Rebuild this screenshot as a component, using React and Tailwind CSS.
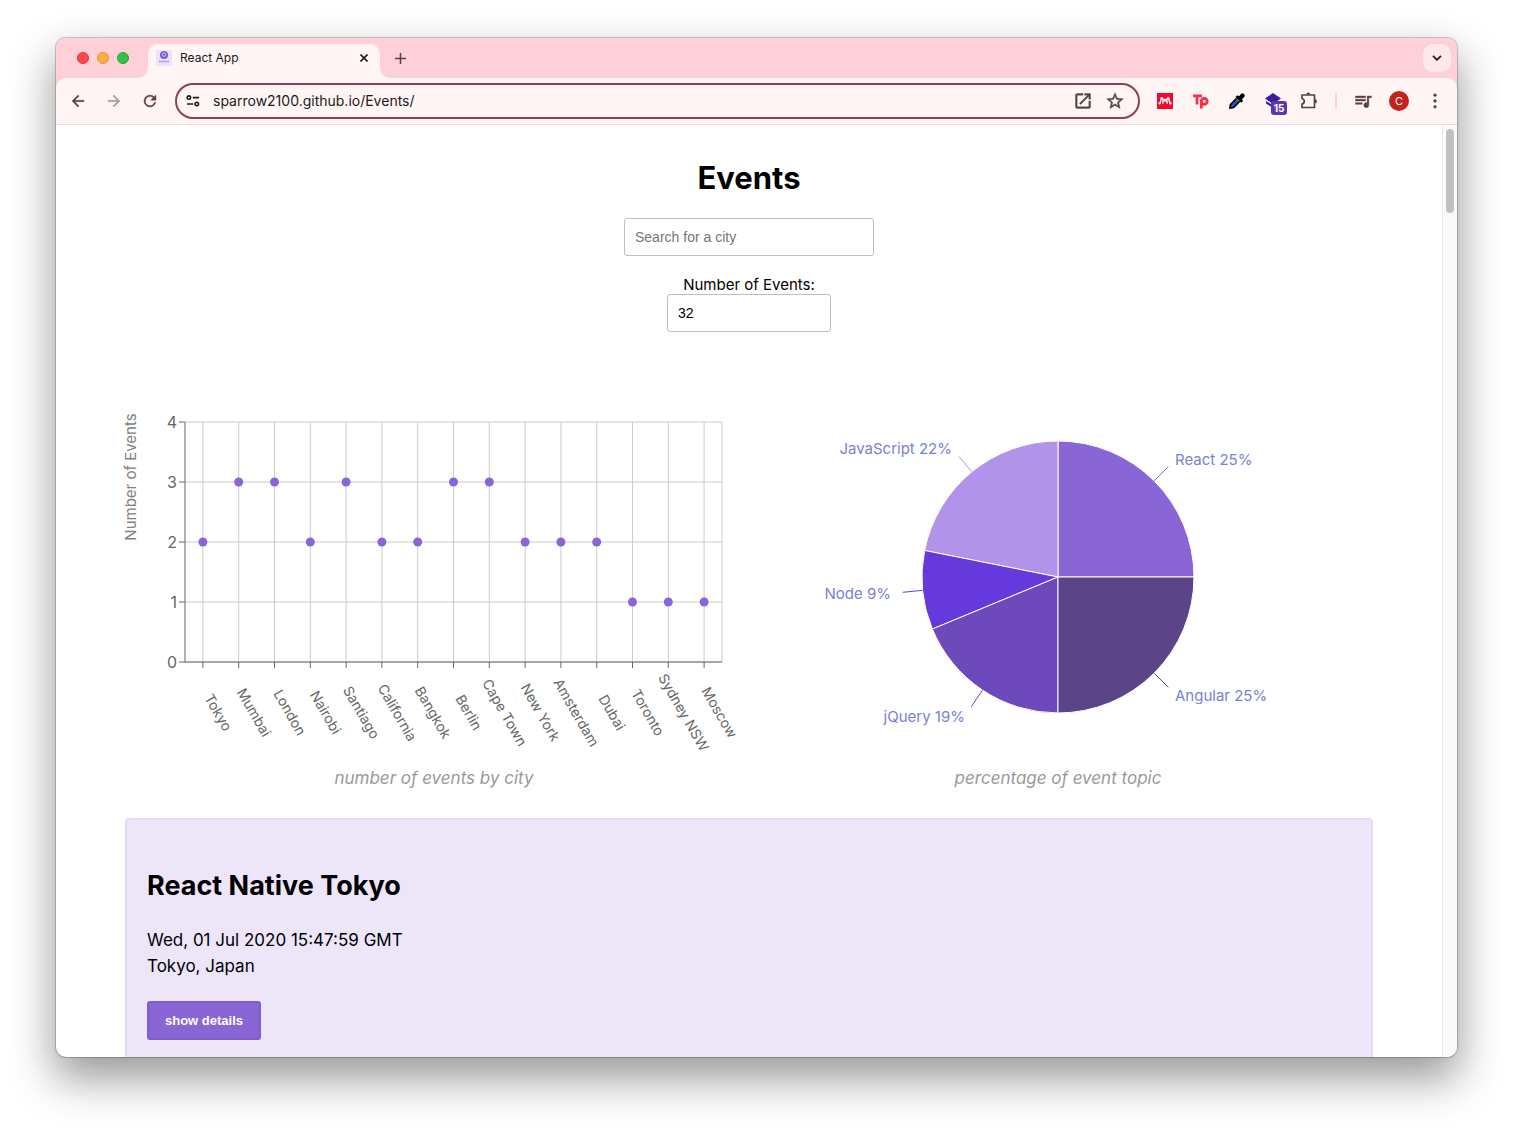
import React from "react";

const cities = [
  ["Tokyo", 2], ["Mumbai", 3], ["London", 3], ["Nairobi", 2], ["Santiago", 3],
  ["California", 2], ["Bangkok", 2], ["Berlin", 3], ["Cape Town", 3], ["New York", 2],
  ["Amsterdam", 2], ["Dubai", 2], ["Toronto", 1], ["Sydney NSW", 1], ["Moscow", 1],
];

const LEFT = 60;
const TOP = 20;
const STEP = 35.8;
const RIGHT = LEFT + STEP * cities.length;
const BOTTOM = TOP + 240;
const yOf = (v) => BOTTOM - v * 60;

function CityChart() {
  return (
    <svg viewBox="0 0 618 360" className="block h-auto w-full overflow-visible" role="img" aria-label="number of events by city">
      <g stroke="#ccc" strokeWidth="1">
        {[0, 1, 2, 3, 4].map((v) => (
          <line key={v} x1={LEFT} x2={RIGHT} y1={yOf(v)} y2={yOf(v)} />
        ))}
        {cities.map(([name], i) => {
          const x = LEFT + STEP * (i + 0.5);
          return <line key={name} x1={x} x2={x} y1={TOP} y2={BOTTOM} />;
        })}
        <line x1={RIGHT} x2={RIGHT} y1={TOP} y2={BOTTOM} />
      </g>
      <g stroke="#666" strokeWidth="1">
        <line x1={LEFT} x2={LEFT} y1={TOP} y2={BOTTOM} />
        <line x1={LEFT} x2={RIGHT} y1={BOTTOM} y2={BOTTOM} />
        {[0, 1, 2, 3, 4].map((v) => (
          <line key={v} x1={LEFT - 6} x2={LEFT} y1={yOf(v)} y2={yOf(v)} />
        ))}
        {cities.map(([name], i) => {
          const x = LEFT + STEP * (i + 0.5);
          return <line key={name} x1={x} x2={x} y1={BOTTOM} y2={BOTTOM + 6} />;
        })}
      </g>
      <g fill="#666" className="text-base">
        {[0, 1, 2, 3, 4].map((v) => (
          <text key={v} x={LEFT - 8} y={yOf(v) + 6} textAnchor="end">{v}</text>
        ))}
      </g>
      <g fill="#666" className="text-sm">
        {cities.map(([name], i) => (
          <text key={name} textAnchor="middle" transform={`translate(${LEFT + STEP * (i + 0.5) + 11} ${BOTTOM + 53}) rotate(60)`}>
            {name}
          </text>
        ))}
      </g>
      <text fill="#808080" className="text-[15px]" textAnchor="middle" transform="translate(11 75) rotate(-90)">
        Number of Events
      </text>
      <g fill="#8a65d6">
        {cities.map(([name, v], i) => (
          <circle key={name} cx={LEFT + STEP * (i + 0.5)} cy={yOf(v)} r="4.5" />
        ))}
      </g>
    </svg>
  );
}

const topics = [
  { name: "React", share: 8, label: "25%", color: "#8a65d6", tx: 426, ty: 63, anchor: "start" },
  { name: "JavaScript", share: 7, label: "22%", color: "#b194ea", tx: 203, ty: 52, anchor: "end" },
  { name: "Node", share: 3, label: "9%", color: "#6539dc", tx: 142, ty: 197, anchor: "end" },
  { name: "jQuery", share: 6, label: "19%", color: "#6d49bb", tx: 216, ty: 320, anchor: "end" },
  { name: "Angular", share: 8, label: "25%", color: "#5c4489", tx: 426, ty: 299, anchor: "start" },
];

function TopicChart() {
  const cx = 309;
  const cy = 175;
  const r = 136;
  const at = (turn, radius) => {
    const a = turn * 2 * Math.PI;
    return [cx + radius * Math.cos(a), cy - radius * Math.sin(a)];
  };
  let start = 0;
  const slices = topics.map((t) => {
    const end = start + t.share / 32;
    const [x0, y0] = at(start, r);
    const [x1, y1] = at(end, r);
    const mid = (start + end) / 2;
    start = end;
    return { ...t, d: `M${x0} ${y0}A${r} ${r} 0 0 0 ${x1} ${y1}L${cx} ${cy}Z`, from: at(mid, r), to: at(mid, r + 20) };
  });
  return (
    <svg viewBox="0 0 618 360" className="block h-auto w-full overflow-visible" role="img" aria-label="percentage of event topic">
      {slices.map((s) => (
        <g key={s.name}>
          <path d={s.d} fill={s.color} stroke="#fff" strokeWidth="1" />
          <line x1={s.from[0]} y1={s.from[1]} x2={s.to[0]} y2={s.to[1]} stroke={s.color} strokeWidth="1" />
          <text x={s.tx} y={s.ty} fill="#7b7fd4" textAnchor={s.anchor} className="text-[15px]">
            {s.name} {s.label}
          </text>
        </g>
      ))}
    </svg>
  );
}

function Icon({ children, size = 20 }) {
  return (
    <svg width={size} height={size} viewBox="0 0 24 24" fill="currentColor" stroke="currentColor" strokeWidth="0.5" aria-hidden="true">
      {children}
    </svg>
  );
}

const iconButton = "flex size-5 shrink-0 items-center justify-center";

function TabStrip() {
  return (
    <div className="flex h-10 shrink-0 items-end bg-[#ffd0d8] pr-1.5 pl-[21px]">
      <div className="flex gap-2 self-center">
        <button aria-label="Close window" className="size-3 rounded-full border border-[#e8333c] bg-[#fe464b]" />
        <button aria-label="Minimize window" className="size-3 rounded-full border border-[#e5953a] bg-[#feac46]" />
        <button aria-label="Zoom window" className="size-3 rounded-full border border-[#2aa53a] bg-[#34c046]" />
      </div>
      <svg width="10" height="10" className="ml-[9px] text-[#fff5f4]" aria-hidden="true">
        <path d="M0 10A10 10 0 0 0 10 0V10Z" fill="currentColor" />
      </svg>
      <div className="flex h-[34px] w-[232px] items-center rounded-t-[10px] bg-[#fff5f4] pr-2 pb-1.5 pl-2">
        <svg width="16" height="16" viewBox="0 0 16 16" aria-hidden="true">
          <rect width="16" height="16" fill="#ebe3fa" />
          <circle cx="8" cy="5" r="4" fill="#8358d2" />
          <circle cx="8" cy="4.6" r="1.8" fill="none" stroke="#d9c9f5" strokeWidth=".9" />
          <path d="M3 11.5h10" stroke="#a68be0" strokeWidth="1.6" strokeDasharray="1.4 .4" />
        </svg>
        <span className="ml-2 flex-1 text-xs text-[#201a1b]">React App</span>
        <button aria-label="Close tab" className="flex size-4 items-center justify-center text-[#201a1b]">
          <svg width="8" height="8" viewBox="0 0 8 8" aria-hidden="true">
            <path d="M.5 .5 7.5 7.5M7.5 .5 .5 7.5" stroke="currentColor" strokeWidth="1.6" />
          </svg>
        </button>
      </div>
      <svg width="10" height="10" className="text-[#fff5f4]" aria-hidden="true">
        <path d="M10 10A10 10 0 0 1 0 0V10Z" fill="currentColor" />
      </svg>
      <button aria-label="New tab" className="flex size-5 items-center justify-center self-center text-[#524346]">
        <svg width="11" height="11" viewBox="0 0 10 10" aria-hidden="true">
          <path d="M5 0V10M0 5H10" stroke="currentColor" strokeWidth="1.4" />
        </svg>
      </button>
      <button aria-label="Search tabs" className="ml-auto flex size-7 items-center justify-center self-center rounded-[10px] bg-[#ffe8ea] text-[#201a1b]">
        <svg width="10" height="6" viewBox="0 0 10 6" fill="none" aria-hidden="true">
          <path d="M1 .8 5 4.800 9 .8" stroke="currentColor" strokeWidth="1.800" />
        </svg>
      </button>
    </div>
  );
}

function Toolbar() {
  return (
    <div className="bg-[#ffd0d8]">
      <div className="flex h-[47px] items-center rounded-t-[10px] border-b border-[#ffd0d8] bg-[#fff5f4] px-3 text-[#5a3f44]">
        <div className="flex gap-4">
          <button aria-label="Back" className={iconButton}>
            <Icon size={18}><path d="M20 11H7.83l5.59-5.59L12 4l-8 8 8 8 1.41-1.41L7.83 13H20v-2z" /></Icon>
          </button>
          <button aria-label="Forward" className="flex size-5 items-center justify-center text-[#a89c9d]">
            <Icon size={18}><path d="m12 4-1.41 1.41L16.17 11H4v2h12.17l-5.58 5.59L12 20l8-8z" /></Icon>
          </button>
          <button aria-label="Reload" className={iconButton}>
            <Icon size={18}><path d="M17.65 6.35A7.95 7.95 0 0 0 12 4a8 8 0 1 0 7.73 10h-2.08A6 6 0 1 1 12 6c1.66 0 3.14.69 4.22 1.78L13 11h7V4z" /></Icon>
          </button>
        </div>
        <div className="ml-[15px] flex h-9 min-w-0 flex-1 items-center rounded-full border-2 border-[#8f3e53] pr-[13px] pl-1.5 text-[#201a1b]">
          <button aria-label="View site information" className={iconButton}>
            <svg width="14" height="12" viewBox="0 0 14 12" fill="none" stroke="currentColor" strokeWidth="1.6" aria-hidden="true">
              <circle cx="2.9" cy="2.6" r="1.7" /><path d="M6.8 2.6H13M1 9H7.2" /><circle cx="10.8" cy="9" r="1.7" />
            </svg>
          </button>
          <input aria-label="Address" defaultValue="sparrow2100.github.io/Events/" className="ml-2.5 min-w-0 flex-1 bg-transparent text-sm outline-none" />
          <div className="flex gap-3 text-[#524346]">
            <button aria-label="Open in app" className={iconButton}>
              <Icon><path d="M19 19H5V5h7V3H5a2 2 0 0 0-2 2v14a2 2 0 0 0 2 2h14c1.1 0 2-.9 2-2v-7h-2zM14 3v2h3.59l-9.83 9.83 1.41 1.41L19 6.41V10h2V3z" /></Icon>
            </button>
            <button aria-label="Bookmark this page" className={iconButton}>
              <Icon><path d="m22 9.24-7.19-.62L12 2 9.19 8.63 2 9.24l5.46 4.73L5.82 21 12 17.27 18.18 21l-1.63-7.03zM12 15.4l-3.76 2.27 1-4.28-3.32-2.88 4.38-.38L12 6.1l1.71 4.04 4.38.38-3.32 2.88 1 4.28z" /></Icon>
            </button>
          </div>
        </div>
        <div className="ml-[15px] flex items-center gap-4">
          <button aria-label="Mendeley" className={iconButton}>
            <svg width="16" height="16" viewBox="0 0 16 16" aria-hidden="true">
              <rect width="16" height="16" fill="#f5082f" />
              <g fill="#fff">
                <circle cx="4.8" cy="5.400" r="1.500" />
                <circle cx="11.200" cy="5.400" r="1.500" />
                <circle cx="8" cy="7.200" r="1.600" />
                <circle cx="2.600" cy="10.300" r="1.200" />
                <circle cx="13.400" cy="10.300" r="1.200" />
              </g>
              <path d="M2.800 10.200C4 9 3.500 7 4.800 5.600L6.300 6.600C5.800 8 5.800 9 5.800 10.800M13.200 10.200C12 9 12.500 7 11.200 5.600L9.700 6.600C10.200 8 10.200 9 10.200 10.800" fill="none" stroke="#fff" strokeWidth="1.300" />
            </svg>
          </button>
          <button aria-label="Toptal" className={iconButton}>
            <svg width="16" height="16" viewBox="0 0 16 16" fill="none" stroke="#fb2f45" strokeWidth="2.800" aria-hidden="true">
              <path d="M0 2.900H9M4 2.900V11.500" />
              <circle cx="11.200" cy="8.300" r="3" />
              <path d="M8.400 7.500V15.500" />
            </svg>
          </button>
          <button aria-label="Color picker" className={iconButton}>
            <svg width="16" height="16" viewBox="0 0 16 16" aria-hidden="true">
              <path d="M8.500 4.500 1.500 11.500 .900 15.100 4.500 14.500 11.500 7.500Z" fill="#2456c4" stroke="#000" strokeWidth="1.600" />
              <path d="M7.500 5.500 9 4 12 7 10.500 8.500Z" fill="#fff" />
              <path d="m6.500 4 1.800-1.800 1.700 1 2-2.300c2.200-1.700 4.800.900 3.200 3.200L13 6.200l1 1.700L12.200 9.700Z" fill="#000" />
            </svg>
          </button>
          <button aria-label="Extension, 15 items" className="relative flex size-5 items-center justify-center">
            <svg width="16" height="16" viewBox="0 0 16 16" fill="#3a1d9e" aria-hidden="true">
              <path d="M8 0 16 5.500 8 11 0 5.500Z" /><path d="M1 8 8 12.500V15L1 10.500Z" />
            </svg>
            <span className="absolute top-2.5 left-2 flex h-3.5 w-4 items-center justify-center rounded-[3px] bg-[#5f35ae] text-[10px] font-bold text-white">15</span>
          </button>
          <button aria-label="Extensions" className={iconButton}>
            <svg width="20" height="20" viewBox="0 0 20 20" fill="none" stroke="currentColor" strokeWidth="1.700" strokeLinejoin="round" aria-hidden="true">
              <path d="M3 4H15.500V16.500H3V13A2.800 2.800 0 0 0 3 7.500Z" />
              <path d="M7.300 3.500A2 2 0 0 1 11.300 3.500ZM16 8.300A2 2 0 0 1 16 12.300Z" fill="currentColor" stroke="none" />
            </svg>
          </button>
        </div>
        <div className="mx-4 h-4 w-0.5 bg-[#ffd0d8]" />
        <div className="flex items-center gap-4">
          <button aria-label="Media controls" className={iconButton}>
            <Icon><path d="M22 6h-5v8.18A3 3 0 1 0 19 17V8h3zM15 6H3v2h12zm0 4H3v2h12zm-4 4H3v2h8z" /></Icon>
          </button>
          <button aria-label="Profile" className="flex size-5 items-center justify-center rounded-full bg-[#c5221a] text-[11px] text-white">C</button>
          <button aria-label="Menu" className={iconButton}>
            <Icon><circle cx="12" cy="5" r="1.700" /><circle cx="12" cy="12" r="1.700" /><circle cx="12" cy="19" r="1.700" /></Icon>
          </button>
        </div>
      </div>
    </div>
  );
}

const field = "h-[38px] rounded-[3px] border border-[#bfbfbf] px-2.5 font-['Liberation_Sans',Arial,sans-serif] text-sm placeholder:text-[#757575]";

export default function App() {
  return (
    <div className="h-screen bg-white px-14 pt-[38px] pb-[74px] font-[Inter,sans-serif]">
      <div className="flex h-full flex-col overflow-hidden rounded-[10px] bg-white shadow-[0_0_1px_1px_rgba(0,0,0,0.22),0_20px_44px_2px_rgba(0,0,0,0.4)]">
        <TabStrip />
        <Toolbar />
        <div className="flex min-h-0 flex-1">
          <main className="min-w-0 flex-1 overflow-hidden px-[69px] pt-8 text-black">
            <div className="flex flex-col items-center">
              <h1 className="text-[31px] leading-[42px] font-bold">Events</h1>
              <input aria-label="City" placeholder="Search for a city" className={`${field} mt-[19px] w-[250px]`} />
              <label htmlFor="count" className="mt-5 text-[15px] leading-[18px]">Number of Events:</label>
              <input id="count" defaultValue="32" className={`${field} w-[164px]`} />
            </div>
            <div className="mt-[70px] grid grid-cols-2 gap-1.5 pr-1.5">
              <figure>
                <CityChart />
                <figcaption className="mt-1 text-center text-[17px] leading-6 text-[#999] italic">number of events by city</figcaption>
              </figure>
              <figure>
                <TopicChart />
                <figcaption className="mt-1 text-center text-[17px] leading-6 text-[#999] italic">percentage of event topic</figcaption>
              </figure>
            </div>
            <article className="mt-7 h-80 rounded-[4px] border-2 border-[#e4dcf6] bg-[#ede6f9] px-5 pt-12">
              <h2 className="text-[27px] leading-9 font-bold">React Native Tokyo</h2>
              <p className="mt-[23px] text-[17px] leading-[26px]">Wed, 01 Jul 2020 15:47:59 GMT</p>
              <p className="text-[17px] leading-[26px]">Tokyo, Japan</p>
              <button className="mt-[22px] h-[39px] w-[114px] rounded-[3px] border-2 border-[#835ecb] bg-[#8a65d6] font-['Liberation_Sans',Arial,sans-serif] text-[13px] font-bold text-white">
                show details
              </button>
            </article>
          </main>
          <div className="w-[15px] shrink-0 border-l border-[#e8e8e8] bg-[#fafafa] px-[3px] pt-1">
            <div className="h-[84px] rounded-full bg-[#c1c1c1]" />
          </div>
        </div>
      </div>
    </div>
  );
}
